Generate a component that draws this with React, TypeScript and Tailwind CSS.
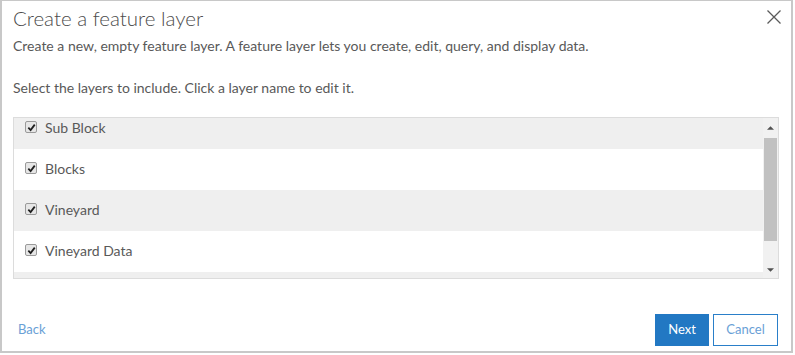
const layers = ['Sub Block', 'Blocks', 'Vineyard', 'Vineyard Data'];

function CheckBox() {
  return (
    <span className="flex h-[12px] w-[12px] items-center justify-center rounded-[2px] border border-[#9a9a9a] bg-[#e6e6e6]">
      <svg viewBox="0 0 10 10" className="h-[9px] w-[9px]">
        <path d="M1.5 5.2 L4 7.8 L8.6 1.8" fill="none" stroke="#1f1f1f" strokeWidth="2" />
      </svg>
    </span>
  );
}

export default function App() {
  return (
    <div className="h-[355px] w-[795px] bg-white font-['Lato',sans-serif] text-[#4c4c4c]">
      <div className="flex h-[353px] w-[793px] flex-col border-2 border-t border-[#c8c8c8] bg-white pl-[11px] pr-[12px]">
        <div className="flex items-start justify-between pt-[2px]">
          <h1 className="text-[20.5px] font-light leading-[30px] text-[#4c4c4c]">Create a feature layer</h1>
          <button className="mt-[7px] mr-[-2px]">
            <svg viewBox="0 0 14 14" className="h-[14px] w-[14px]">
              <path d="M0.5 0.5 L13.5 13.5 M13.5 0.5 L0.5 13.5" stroke="#5a5a5a" strokeWidth="1.3" fill="none" />
            </svg>
          </button>
        </div>
        <p className="mt-[3px] text-[14px] leading-[20px] text-[#595959]">
          Create a new, empty feature layer. A feature layer lets you create, edit, query, and display data.
        </p>
        <p className="mt-[22px] text-[14px] leading-[20px] text-[#595959]">
          Select the layers to include. Click a layer name to edit it.
        </p>
        <div className="mt-[19px] flex h-[162px] border border-[#dcdcdc]">
          <div className="flex-1 overflow-hidden">
            <div className="mt-[-10px]">
              {layers.map((name, i) => (
                <div
                  key={name}
                  className={`flex h-[41px] items-center gap-[8px] pb-[3px] pl-[11px] text-[14px] text-[#595959] ${i % 2 === 0 ? 'bg-[#efefef]' : 'bg-white'}`}
                >
                  <CheckBox />
                  <span>{name}</span>
                </div>
              ))}
              <div className="h-[41px] bg-[#efefef]" />
            </div>
          </div>
          <div className="flex w-[15px] flex-col bg-[#f1f1f1]">
            <div className="flex h-[20px] items-center justify-center">
              <svg viewBox="0 0 8 4" className="h-[4px] w-[7px]"><path d="M0 4 L4 0 L8 4 Z" fill="#505050" /></svg>
            </div>
            <div className="mx-[1px] h-[103px] bg-[#c1c1c1]" />
            <div className="flex-1" />
            <div className="flex h-[17px] items-center justify-center">
              <svg viewBox="0 0 8 4" className="h-[4px] w-[7px]"><path d="M0 0 L8 0 L4 4 Z" fill="#505050" /></svg>
            </div>
          </div>
        </div>
        <div className="mt-auto mb-[5px] flex items-center justify-between">
          <button className="ml-[5px] text-[13px] text-[#6a9fd6]">Back</button>
          <div className="flex gap-[4px]">
            <button className="h-[32px] w-[54px] bg-[#2278c3] text-[13px] text-white">Next</button>
            <button className="mr-[1px] h-[32px] w-[65px] border border-[#2a7fc9] bg-white text-[13px] text-[#6a9fd6]">Cancel</button>
          </div>
        </div>
      </div>
    </div>
  );
}
